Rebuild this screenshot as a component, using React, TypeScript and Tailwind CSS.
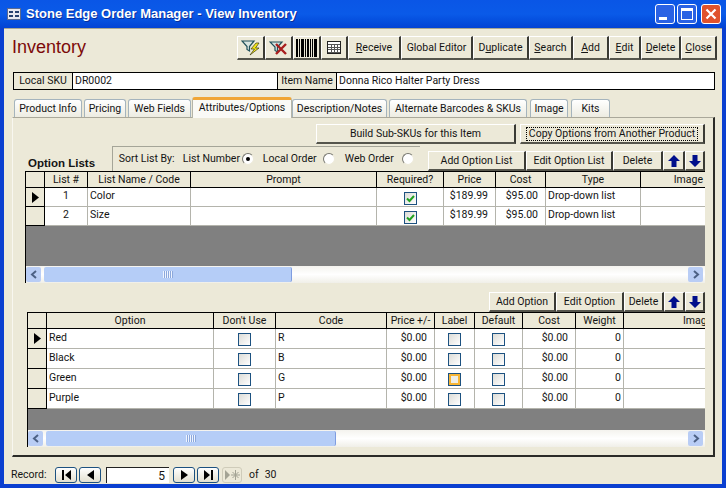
import type { ReactNode } from "react";

const cell = "flex items-center border-r border-b border-[#b4b4ac] px-[2px] pb-[2px] bg-white truncate";
const head = "flex items-center justify-center border-r border-b border-black bg-[#ece9d8] overflow-hidden whitespace-nowrap";

function Btn({ className = "", children }: { className?: string; children: ReactNode }) {
  return (
    <button className={`flex shrink-0 items-center justify-center border-t border-l border-t-white border-l-white border-r-2 border-b-2 border-r-[#3a3a34] border-b-[#55554c] bg-[#ece9d8] whitespace-nowrap ${className}`}>
      {children}
    </button>
  );
}

function Key({ children }: { children: string }) {
  return <span className="underline underline-offset-1">{children}</span>;
}

function Tab({ className = "", active = false, children }: { className?: string; active?: boolean; children: ReactNode }) {
  if (active) {
    return (
      <div className={`relative z-10 flex h-[21px] shrink-0 items-center justify-center rounded-t-[3px] border-t-[3px] border-x border-t-[#f0a535] border-x-[#b5b5a8] bg-[#fafaf6] pb-[2px] whitespace-nowrap ${className}`}>
        {children}
      </div>
    );
  }
  return (
    <div className={`flex h-[19px] shrink-0 items-center justify-center rounded-t-[3px] border-t border-x border-[#a5b4bd] bg-gradient-to-b from-white to-[#ecebe0] whitespace-nowrap ${className}`}>
      {children}
    </div>
  );
}

function Check({ checked = false, hot = false }: { checked?: boolean; hot?: boolean }) {
  if (hot) {
    return (
      <span className="mx-auto mt-[4px] block h-[13px] w-[13px] border border-[#1c5180] bg-[#dcdcd7] p-0">
        <span className="block h-full w-full border-2 border-[#f8b636] bg-[#eeeee6]" />
      </span>
    );
  }
  return (
    <span className="mx-auto mt-[4px] flex h-[13px] w-[13px] items-center justify-center border border-[#1c5180] bg-gradient-to-br from-[#dcdcd7] to-white">
      {checked && (
        <svg viewBox="0 0 9 9" className="h-[9px] w-[9px]">
          <path d="M1 4.5 L3.5 7 L8 2" fill="none" stroke="#21a121" strokeWidth="2" />
        </svg>
      )}
    </span>
  );
}

function Radio({ on = false }: { on?: boolean }) {
  return (
    <span className="flex h-[12px] w-[12px] shrink-0 items-center justify-center rounded-full border border-t-[#77776f] border-l-[#77776f] border-r-[#ece9d8] border-b-[#ece9d8] bg-white">
      {on && <span className="h-[4px] w-[4px] rounded-full bg-black" />}
    </span>
  );
}

function Arrow({ up = false }: { up?: boolean }) {
  return (
    <svg viewBox="0 0 14 14" className="h-[14px] w-[14px]">
      <path d={up ? "M7 1 L13 7 L9.5 7 L9.5 13 L4.5 13 L4.5 7 L1 7 Z" : "M7 13 L13 7 L9.5 7 L9.5 1 L4.5 1 L4.5 7 L1 7 Z"} fill="#000f8c" />
    </svg>
  );
}

function RowMark({ current = false }: { current?: boolean }) {
  return (
    <div className="flex items-center justify-center border-r border-b border-black bg-[#ece9d8]">
      {current && (
        <svg viewBox="0 0 7 11" className="h-[11px] w-[7px]">
          <path d="M0 0 L7 5.5 L0 11 Z" fill="#000" />
        </svg>
      )}
    </div>
  );
}

function ScrollBar({ thumb }: { thumb: string }) {
  return (
    <div className="flex h-[17px] items-center bg-gradient-to-b from-[#f4f3ee] via-white to-[#f0efe8] pr-[2px]">
      <div className="flex h-[15px] w-[15px] shrink-0 items-center justify-center rounded-[2px] bg-[#b9cdf5]">
        <svg viewBox="0 0 8 9" className="h-[9px] w-[8px]">
          <path d="M6 1 L2 4.5 L6 8" fill="none" stroke="#4d6185" strokeWidth="2" />
        </svg>
      </div>
      <div className={`ml-[3px] flex h-[15px] items-center justify-center rounded-[2px] border-r border-[#7f9de0] bg-[#b5cdf7] ${thumb}`}>
        <span className="h-[7px] w-[10px] bg-[repeating-linear-gradient(90deg,#eef4ff_0,#eef4ff_1px,#8ca8dc_1px,#8ca8dc_2px)]" />
      </div>
      <div className="flex-1" />
      <div className="flex h-[15px] w-[15px] shrink-0 items-center justify-center rounded-[2px] bg-[#b9cdf5]">
        <svg viewBox="0 0 8 9" className="h-[9px] w-[8px]">
          <path d="M2 1 L6 4.5 L2 8" fill="none" stroke="#4d6185" strokeWidth="2" />
        </svg>
      </div>
    </div>
  );
}

function NavBtn({ className = "", children }: { className?: string; children: ReactNode }) {
  return (
    <div className={`flex h-[16px] w-[22px] shrink-0 items-center justify-center rounded-[3px] border border-[#1c5180] bg-gradient-to-b from-white to-[#e3e0d0] ${className}`}>
      {children}
    </div>
  );
}

const listRows = [
  { n: "1", name: "Color" },
  { n: "2", name: "Size" },
];

const optionRows = [
  { name: "Red", code: "R" },
  { name: "Black", code: "B" },
  { name: "Green", code: "G", hot: true },
  { name: "Purple", code: "P" },
];

export default function App() {
  return (
    <div className="flex h-[488px] w-[726px] flex-col overflow-hidden bg-[#0a3fd0] font-['Roboto','Liberation_Sans',sans-serif] text-[10.5px] text-[#141414]">
      <div className="flex h-[28px] shrink-0 items-center bg-gradient-to-b from-[#0a56e6] via-[#0a5ae8] to-[#0343d4] pr-[5px] pl-[7px]">
        <svg viewBox="0 0 14 12" className="h-[12px] w-[14px]">
          <rect x="0.5" y="0.5" width="13" height="11" fill="#e8e8f0" stroke="#5a6a90" />
          <rect x="2" y="3" width="4" height="2" fill="#27406e" />
          <rect x="8" y="3" width="4" height="2" fill="#27406e" />
          <rect x="2" y="7" width="4" height="2" fill="#27406e" />
          <rect x="8" y="7" width="4" height="2" fill="#27406e" />
        </svg>
        <span className="ml-[5px] font-['Liberation_Sans',sans-serif] text-[13px] font-bold text-white [text-shadow:1px_1px_0_#0a2f9a]">
          Stone Edge Order Manager - View Inventory
        </span>
        <div className="flex-1" />
        <div className="flex h-[20px] w-[20px] items-end rounded-[3px] border border-white bg-[#2a62e4] pb-[3px] pl-[3px]">
          <span className="h-[3px] w-[8px] bg-white" />
        </div>
        <div className="ml-[2px] flex h-[20px] w-[20px] items-center justify-center rounded-[3px] border border-white bg-[#2a62e4]">
          <span className="h-[12px] w-[12px] border border-t-[3px] border-white" />
        </div>
        <div className="ml-[4px] flex h-[20px] w-[20px] items-center justify-center rounded-[3px] border border-white bg-[#e0522c]">
          <svg viewBox="0 0 12 12" className="h-[12px] w-[12px]">
            <path d="M1.5 1.5 L10.5 10.5 M10.5 1.5 L1.5 10.5" stroke="#fff" strokeWidth="2.2" />
          </svg>
        </div>
      </div>

      <div className="mx-[4px] mb-[4px] flex min-h-0 flex-1 flex-col border-t border-[#a9a692] bg-[#ece9d8]">
        <div className="flex h-[31px] shrink-0 items-end pr-[5px] pl-[8px]">
          <span className="self-end font-['Liberation_Sans',sans-serif] text-[18px] leading-[26px] text-[#7c0a0a]">Inventory</span>
          <div className="flex-1" />
          <Btn className="h-[24px] w-[28px]">
            <svg viewBox="0 0 20 18" className="h-[18px] w-[20px]">
              <path d="M1 2 H13 L8.5 7.5 V12 L6 10.5 V7.5 Z" fill="#d8e4e0" stroke="#20505a" strokeWidth="1.2" />
              <path d="M15 4 L10 10 H13.5 L9 16 L18 9 H14.5 L18 4 Z" fill="#f5e616" stroke="#3a3a10" strokeWidth="0.7" />
            </svg>
          </Btn>
          <Btn className="h-[24px] w-[28px]">
            <svg viewBox="0 0 20 18" className="h-[18px] w-[20px]">
              <path d="M1 3 H13 L8.5 8 V13 L6 11.5 V8 Z" fill="#d8e4e0" stroke="#20505a" strokeWidth="1.2" />
              <path d="M7 5 L17 15 M17 5 L7 15" stroke="#a81e1e" strokeWidth="2.4" />
            </svg>
          </Btn>
          <Btn className="h-[24px] w-[28px]">
            <svg viewBox="0 0 22 18" className="h-[18px] w-[22px]" shapeRendering="crispEdges">
              <path d="M0 0h2v18H0zM3 0h1v18H3zM5 0h3v18H5zM9 0h1v18H9zM11 0h2v18h-2zM14 0h1v18h-1zM16 0h1v18h-1zM18 0h3v18h-3z" fill="#000" />
            </svg>
          </Btn>
          <Btn className="h-[24px] w-[27px]">
            <svg viewBox="0 0 14 13" className="h-[13px] w-[14px]" shapeRendering="crispEdges">
              <rect x="0.5" y="0.5" width="13" height="12" fill="#fff" stroke="#222" />
              <path d="M1 3h12v1H1zM1 5.5h12v1H1zM1 8h12v1H1zM1 10.5h12v1H1zM3.5 3h1v9h-1zM6.5 3h1v9h-1zM9.5 3h1v9h-1z" fill="#555" />
            </svg>
          </Btn>
          <Btn className="h-[24px] w-[53px]"><Key>R</Key>eceive</Btn>
          <Btn className="h-[24px] w-[72px]">Global Editor</Btn>
          <Btn className="h-[24px] w-[56px]">D<Key>u</Key>plicate</Btn>
          <Btn className="h-[24px] w-[44px]"><Key>S</Key>earch</Btn>
          <Btn className="h-[24px] w-[36px]"><Key>A</Key>dd</Btn>
          <Btn className="h-[24px] w-[32px]"><Key>E</Key>dit</Btn>
          <Btn className="h-[24px] w-[40px]"><Key>D</Key>elete</Btn>
          <Btn className="h-[24px] w-[36px]"><Key>C</Key>lose</Btn>
        </div>

        <div className="mt-[12px] ml-[9px] flex h-[18px] w-[702px] shrink-0 items-stretch border border-black leading-[16px]">
          <div className="flex w-[59px] items-center justify-center border-r border-black">Local SKU</div>
          <div className="flex w-[204px] items-center bg-white px-[2px]">DR0002</div>
          <div className="flex w-[60px] items-center justify-center border-x border-black">Item Name</div>
          <div className="flex flex-1 items-center bg-white px-[2px]">Donna Rico Halter Party Dress</div>
        </div>

        <div className="mt-[7px] flex h-[21px] shrink-0 items-end pl-[10px]">
          <Tab className="w-[68px]">Product Info</Tab>
          <Tab className="ml-[2px] w-[42px]">Pricing</Tab>
          <Tab className="ml-[2px] w-[63px]">Web Fields</Tab>
          <Tab active className="ml-[1px] w-[100px]">Attributes/Options</Tab>
          <Tab className="w-[95px]">Description/Notes</Tab>
          <Tab className="ml-[2px] w-[138px]">Alternate Barcodes &amp; SKUs</Tab>
          <Tab className="ml-[3px] w-[38px]">Image</Tab>
          <Tab className="ml-[3px] w-[39px]">Kits</Tab>
        </div>

        <div className="mt-[-1px] ml-[8px] flex h-[340px] w-[703px] shrink-0 flex-col border border-t-[#aaa89a] border-l-[#f8f7f0] border-r-2 border-b-2 border-r-[#2b2b28] border-b-[#2b2b28] pt-[6px] pr-[8px]">
          <div className="flex h-[19px] shrink-0 justify-end">
            <Btn className="h-[20px] w-[200px]">Build Sub-SKUs for this Item</Btn>
            <Btn className="ml-[4px] h-[20px] w-[185px]">
              <span className="flex h-[14px] w-[172px] items-center justify-center border border-dotted border-black">
                Copy Options from Another Product
              </span>
            </Btn>
          </div>

          <div className="mt-[3px] flex h-[25px] shrink-0">
            <div className="ml-[15px] w-[84px] self-end pb-[1px] font-['Liberation_Sans',sans-serif] text-[11.5px] leading-[14px] font-bold">Option Lists</div>
            <div className="flex w-[309px] items-center border-t border-l border-[#a5a598] pl-[6px] whitespace-nowrap">
              <span className="w-[64px]">Sort List By:</span>
              <span className="w-[59px]">List Number</span>
              <Radio on />
              <span className="ml-[9px] w-[60px]">Local Order</span>
              <Radio />
              <span className="ml-[10px] w-[57px]">Web Order</span>
              <Radio />
            </div>
            <div className="mt-[5px] ml-[8px] flex h-[20px]">
              <Btn className="h-[20px] w-[98px]">Add Option List</Btn>
              <Btn className="h-[20px] w-[87px]">Edit Option List</Btn>
              <Btn className="h-[20px] w-[50px]">Delete</Btn>
              <Btn className="h-[20px] w-[22px]"><Arrow up /></Btn>
              <Btn className="h-[20px] w-[20px]"><Arrow /></Btn>
            </div>
          </div>

          <div className="ml-auto flex h-[112px] w-[680px] shrink-0 flex-col border-t border-l border-black">
            <div className="grid grid-cols-[19px_43px_103px_186px_67px_52px_50px_95px_64px] grid-rows-[16px_19px_19px]">
              <div className={head} />
              <div className={head}>List #</div>
              <div className={head}>List Name / Code</div>
              <div className={head}>Prompt</div>
              <div className={head}>Required?</div>
              <div className={head}>Price</div>
              <div className={head}>Cost</div>
              <div className={head}>Type</div>
              <div className="flex items-center justify-end overflow-hidden border-b border-black bg-[#ece9d8] pr-[2px]">Image</div>
              {listRows.map((row, i) => (
                <div key={row.n} className="contents">
                  <RowMark current={i === 0} />
                  <div className={`${cell} justify-center`}>{row.n}</div>
                  <div className={cell}>{row.name}</div>
                  <div className={cell} />
                  <div className={cell}><Check checked /></div>
                  <div className={`${cell} justify-end pr-[7px]`}>$189.99</div>
                  <div className={`${cell} justify-end pr-[7px]`}>$95.00</div>
                  <div className={cell}>Drop-down list</div>
                  <div className="border-b border-[#b4b4ac] bg-white" />
                </div>
              ))}
            </div>
            <div className="h-[40px] shrink-0 bg-[#808080]" />
            <ScrollBar thumb="w-[248px]" />
          </div>

          <div className="mt-[9px] flex h-[20px] shrink-0 justify-end">
            <Btn className="h-[20px] w-[67px]">Add Option</Btn>
            <Btn className="h-[20px] w-[68px]">Edit Option</Btn>
            <Btn className="h-[20px] w-[40px]">Delete</Btn>
            <Btn className="h-[20px] w-[21px]"><Arrow up /></Btn>
            <Btn className="h-[20px] w-[20px]"><Arrow /></Btn>
          </div>

          <div className="ml-auto flex h-[135px] w-[678px] shrink-0 flex-col border-t border-l border-black">
            <div className="grid grid-cols-[19px_167px_62px_111px_48px_40px_48px_53px_48px_81px] grid-rows-[16px_20px_20px_20px_20px]">
              <div className={head} />
              <div className={head}>Option</div>
              <div className={head}>Don't Use</div>
              <div className={head}>Code</div>
              <div className={head}>Price +/-</div>
              <div className={head}>Label</div>
              <div className={head}>Default</div>
              <div className={head}>Cost</div>
              <div className={head}>Weight</div>
              <div className="flex items-center justify-end overflow-hidden border-b border-black bg-[#ece9d8]">
                <span className="w-[22px] overflow-hidden whitespace-nowrap">Image</span>
              </div>
              {optionRows.map((row, i) => (
                <div key={row.name} className="contents">
                  <RowMark current={i === 0} />
                  <div className={cell}>{row.name}</div>
                  <div className={cell}><Check /></div>
                  <div className={cell}>{row.code}</div>
                  <div className={`${cell} justify-end pr-[7px]`}>$0.00</div>
                  <div className={cell}><Check hot={row.hot} /></div>
                  <div className={cell}><Check /></div>
                  <div className={`${cell} justify-end pr-[7px]`}>$0.00</div>
                  <div className={`${cell} justify-end`}>0</div>
                  <div className="border-b border-[#b4b4ac] bg-white" />
                </div>
              ))}
            </div>
            <div className="h-[21px] shrink-0 bg-[#808080]" />
            <ScrollBar thumb="w-[290px]" />
          </div>
        </div>

        <div className="mt-[9px] flex h-[18px] shrink-0 items-center pl-[7px]">
          <span className="w-[44px]">Record:</span>
          <NavBtn>
            <svg viewBox="0 0 11 10" className="h-[10px] w-[11px]"><path d="M1 0h2v10H1zM10 0v10L4 5z" /></svg>
          </NavBtn>
          <NavBtn className="ml-[2px]">
            <svg viewBox="0 0 7 10" className="h-[10px] w-[7px]"><path d="M7 0v10L0 5z" /></svg>
          </NavBtn>
          <div className="ml-[5px] flex h-[16px] w-[63px] items-center justify-end border-t border-l border-[#222] bg-white pr-[4px] text-[12px]">5</div>
          <NavBtn className="ml-[4px]">
            <svg viewBox="0 0 7 10" className="h-[10px] w-[7px]"><path d="M0 0v10L7 5z" /></svg>
          </NavBtn>
          <NavBtn className="ml-[2px]">
            <svg viewBox="0 0 11 10" className="h-[10px] w-[11px]"><path d="M8 0h2v10H8zM1 0v10L7 5z" /></svg>
          </NavBtn>
          <div className="ml-[3px] flex h-[16px] w-[20px] items-center justify-center rounded-[3px] border border-[#cfccba]">
            <svg viewBox="0 0 15 10" className="h-[10px] w-[15px]">
              <path d="M0 0v10L5 5z" fill="#a3a394" />
              <path d="M10.5 0v10M6 5h9M7.5 2l6 6M13.5 2l-6 6" stroke="#a3a394" strokeWidth="1" />
            </svg>
          </div>
          <span className="ml-[7px]">of</span>
          <span className="ml-[6px]">30</span>
        </div>
      </div>
    </div>
  );
}
